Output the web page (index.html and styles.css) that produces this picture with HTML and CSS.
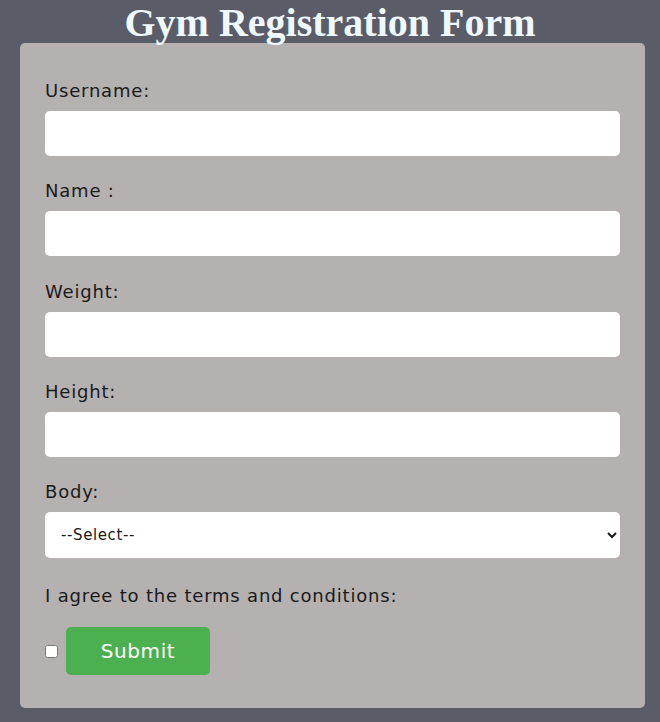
FILE: index.html
```html
<!DOCTYPE html>
<html lang="en">
<head>
<meta charset="utf-8">
<title>Gym Registration Form</title>
<link rel="stylesheet" href="styles.css">
</head>
<body>
<h1 class="title">Gym Registration Form</h1>
<form class="card">
  <label class="field-label" for="username">Username:</label>
  <input class="text-input" type="text" id="username">
  <label class="field-label" for="name">Name :</label>
  <input class="text-input" type="text" id="name">
  <label class="field-label" for="weight">Weight:</label>
  <input class="text-input" type="text" id="weight">
  <label class="field-label" for="height">Height:</label>
  <input class="text-input" type="text" id="height">
  <label class="field-label" for="body">Body:</label>
  <select class="select-input" id="body">
    <option>--Select--</option>
  </select>
  <label class="field-label terms" for="agree">I agree to the terms and conditions:</label>
  <div class="submit-row">
    <input class="check" type="checkbox" id="agree">
    <button class="submit" type="button">Submit</button>
  </div>
</form>
</body>
</html>
```
FILE: styles.css
```css
html, body {
  margin: 0;
  padding: 0;
}
body {
  background: #5a5c68;
  width: 660px;
  height: 722px;
  overflow: hidden;
  font-family: "DejaVu Sans", sans-serif;
}
.title {
  margin: 0;
  font-family: "Liberation Serif", serif;
  font-weight: bold;
  font-size: 40px;
  text-align: center;
  color: #f0f8ff;
  line-height: 43px;
  padding-top: 1px;
}
.card {
  display: flex;
  flex-direction: column;
  margin: -1px 15px 0 20px;
  padding: 36px 25px 33px;
  background: #b5b1b0;
  border-radius: 5px;
}
.field-label {
  display: block;
  font-size: 18px;
  letter-spacing: 0.8px;
  line-height: 24px;
  color: #1a1a1a;
  margin-bottom: 8px;
}
.text-input {
  height: 45px;
  box-sizing: border-box;
  border: none;
  border-radius: 5px;
  background: #fff;
  margin: 0 0 23.25px;
  padding: 0 12px;
  font-size: 16px;
}
.select-input {
  height: 46px;
  box-sizing: border-box;
  border: none;
  border-radius: 5px;
  background: #fff;
  margin: 0 0 26px;
  padding: 0 12px;
  font-family: "DejaVu Sans", sans-serif;
  font-size: 15px;
  letter-spacing: 0.6px;
  color: #1a1a1a;
}
.terms {
  margin-bottom: 19px;
}
.submit-row {
  display: flex;
  align-items: center;
  gap: 8px;
}
.check {
  margin: 0;
  width: 13px;
  height: 13px;
}
.submit {
  width: 144px;
  height: 48px;
  border: none;
  border-radius: 5px;
  background: #4caf50;
  color: #fff;
  font-family: "DejaVu Sans", sans-serif;
  font-size: 20px;
  letter-spacing: 0.6px;
}
```
